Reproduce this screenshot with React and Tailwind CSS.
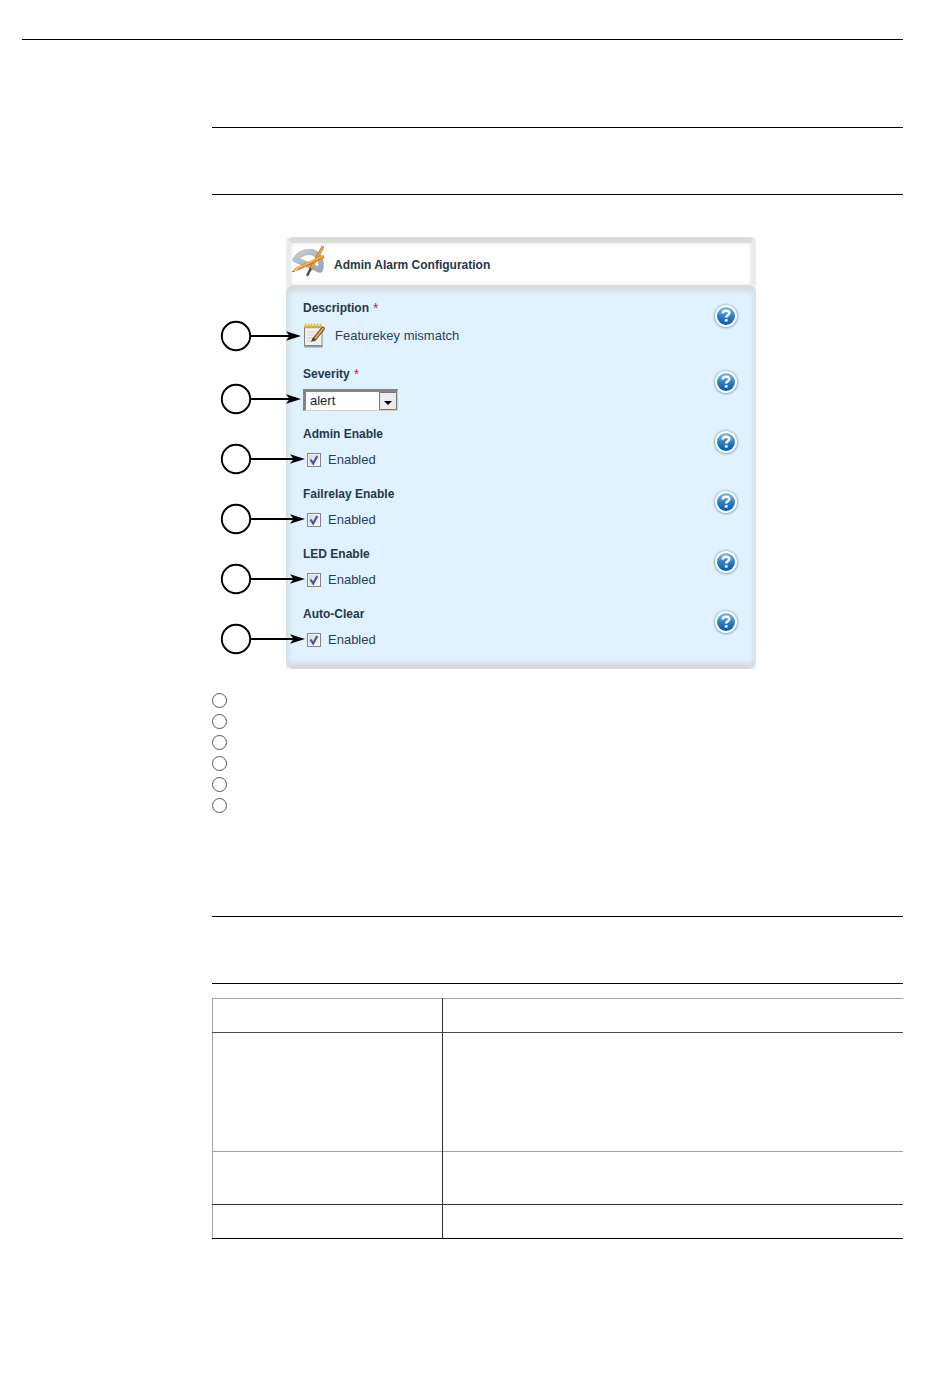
import React, { useState } from "react";

function Callout({ long }) {
  const tip = long ? 85 : 81;
  return (
    <svg width="88" height="32" viewBox="0 0 88 32" fill="none" aria-hidden="true">
      <circle cx="16" cy="16" r="14.2" fill="#fff" stroke="#000" strokeWidth="1.9" />
      <path d={`M30 16H${tip - 9}`} stroke="#000" strokeWidth="2" />
      <path d={`M${tip} 16l-15 -4.7l3.6 4.7l-3.6 4.7z`} fill="#000" />
    </svg>
  );
}

function HelpButton({ topic }) {
  return (
    <button type="button" aria-label={`Help: ${topic}`} className="mt-1 size-7 shrink-0 cursor-pointer">
      <svg width="28" height="28" viewBox="0 0 28 28" fill="none" aria-hidden="true">
        <defs>
          <linearGradient id="help-fill" x1="0" y1="0" x2="0" y2="1">
            <stop offset="0" stopColor="#79bdf0" />
            <stop offset="0.5" stopColor="#2f80cb" />
            <stop offset="1" stopColor="#0b57a4" />
          </linearGradient>
          <radialGradient id="help-halo">
            <stop offset="0.72" stopColor="#6d8795" stopOpacity="0.8" />
            <stop offset="1" stopColor="#b9cfdb" stopOpacity="0" />
          </radialGradient>
        </defs>
        <circle cx="14" cy="14.3" r="14" fill="url(#help-halo)" />
        <circle cx="14" cy="14" r="11" fill="#fff" />
        <circle cx="14" cy="14" r="9" fill="url(#help-fill)" />
        <path d="M10.8 11.6c0-1.8 1.2-2.8 3.2-2.8s3.2 1 3.2 2.4c0 2.1-3 2-3 4.4" stroke="#fff" strokeWidth="2.6" />
        <path d="M12.8 17.2h2.8v2.4h-2.8z" fill="#fff" />
      </svg>
    </button>
  );
}

function ToolsIcon() {
  return (
    <svg width="36" height="36" viewBox="0 0 36 36" fill="none" aria-hidden="true">
      <defs>
        <linearGradient id="protractor" x1="0" y1="0" x2="1" y2="1">
          <stop offset="0" stopColor="#c6cfd6" />
          <stop offset="1" stopColor="#93a3b0" />
        </linearGradient>
      </defs>
      <path
        fillRule="evenodd"
        d="M2 15C5 8 14 4 22 5.500c8 2 12 10 10 20-.6 3-3 4-5 2.500L3.500 18c-1.500-.6-2-1.800-1.500-3z M8.500 14.500c4-4 10-5 14.500-2.500 3.500 2 5 6 4.500 10.500z"
        fill="url(#protractor)"
        stroke="#a3aeb6"
        strokeWidth="0.6"
      />
      <path d="M31.500 3.500L19 26" stroke="#c46a1a" strokeWidth="2.8" strokeLinecap="round" />
      <path d="M31.500 3.500L20 25" stroke="#f5a744" strokeWidth="1.6" strokeLinecap="round" />
      <path d="M19.500 25L16.500 31" stroke="#4a4c58" strokeWidth="2.400" strokeLinecap="round" />
      <path d="M31.500 13L5 25.500" stroke="#d67b16" strokeWidth="3.400" strokeLinecap="round" />
      <path d="M31 12.600L6 24.500" stroke="#fbb851" strokeWidth="1.600" strokeLinecap="round" />
      <path d="M6 23.500l1.500 3L.8 28z" fill="#e2bd91" />
      <path d="M2.800 26.400l.5 1.100L.6 28.200z" fill="#333" />
    </svg>
  );
}

function NoteIcon() {
  return (
    <svg width="24" height="26" viewBox="0 0 24 26" fill="none" aria-hidden="true">
      <path d="M2 23.500h17" stroke="#91a0a8" strokeWidth="2" strokeLinecap="round" />
      <path d="M1.500 4h17.500v18.500H1.500z" fill="#f1f1ee" stroke="#82827e" strokeWidth="1" />
      <path d="M4 9h12M4 12h11M4 15h10M4 18h9" stroke="#d0d0cc" strokeWidth="1" />
      <path d="M1.500 3.500h17.500v1.600H1.500z" fill="#c89b1f" />
      <path d="M2.500 1.500v3M5.500 1.500v3M8.500 1.500v3M11.500 1.500v3M14.500 1.500v3M17.500 1.500v3" stroke="#e8b923" strokeWidth="1.800" strokeLinecap="round" />
      <path d="M20 5.500L11.500 16" stroke="#7a4f20" strokeWidth="3.800" strokeLinecap="round" />
      <path d="M20 5.500L12.500 15" stroke="#d8ab69" strokeWidth="2" strokeLinecap="round" />
      <path d="M9.800 14.500l3 2.600L8 19z" fill="#4b4033" />
    </svg>
  );
}

function Field({ id, label, required, long, tall, children }) {
  return (
    <div className={`relative flex justify-between ${tall ? "h-[66px]" : "h-[60px]"}`}>
      <div>
        <label htmlFor={id} className="flex h-5 gap-1 text-[12px] leading-5 font-bold text-[#26384a]">
          {label}
          {required && <span className="text-[14px] font-normal text-[#f01818]">*</span>}
        </label>
        <div className={`flex items-center ${tall ? "h-[35px]" : "h-[31px]"}`}>{children}</div>
      </div>
      <HelpButton topic={label} />
      <div className={`pointer-events-none absolute -left-[83px] ${tall ? "top-[22px]" : "top-[19px]"}`}>
        <Callout long={long} />
      </div>
    </div>
  );
}

function CheckField({ id, label }) {
  const [on, setOn] = useState(true);
  return (
    <Field id={id} label={label} long>
      <span className="ml-1 grid">
        <input
          id={id}
          type="checkbox"
          checked={on}
          onChange={(e) => setOn(e.target.checked)}
          className="col-start-1 row-start-1 size-[14px] appearance-none border border-[#858585] bg-linear-to-br from-[#d3d5da] to-[#fafafa] shadow-[inset_0_0_0_1px_#f4f4f4]"
        />
        {on && (
          <svg className="pointer-events-none col-start-1 row-start-1" width="14" height="14" viewBox="0 0 14 14" fill="none" aria-hidden="true">
            <path d="M3.500 6.500l2.700 4L10.300 3" stroke="#4058a0" strokeWidth="2.200" />
          </svg>
        )}
      </span>
      <label htmlFor={id} className="ml-[7px] text-[13px] text-[#2c4156]">
        Enabled
      </label>
    </Field>
  );
}

function Panel() {
  return (
    <form className="w-[470px] bg-[#edf1f5] text-[#26384a]" onSubmit={(e) => e.preventDefault()}>
      <div className="flex h-12 items-center rounded-t-lg border-x-[5px] border-t-[6px] border-[#dcdcdc] border-x-[#ebebeb] bg-white shadow-[inset_0_0_4px_#e4e4e0]">
        <span className="-mt-1 w-[43px]">
          <ToolsIcon />
        </span>
        <h2 className="mt-[2px] text-[12px] font-bold">Admin Alarm Configuration</h2>
      </div>
      <div className="rounded-lg border-t-4 border-b-4 border-[#d8dbdd] bg-[#e0f2ff] pt-[9px] pr-4 pb-px pl-[17px] shadow-[inset_0_0_6px_2px_#cfd9df]">
        <Field id="description" label="Description" required tall>
          <NoteIcon />
          <output id="description" className="ml-2 text-[13px] text-[#2c4156]">
            Featurekey mismatch
          </output>
        </Field>
        <Field id="severity" label="Severity" required>
          <span className="grid h-[22px] w-[95px] border-t-[3px] border-r border-b border-l-[3px] border-[#858585] border-r-[#d4d0c8] border-b-[#d4d0c8] bg-white">
            <select id="severity" defaultValue="alert" className="col-start-1 row-start-1 appearance-none pl-1 text-[13px] leading-4 text-[#161f2c]">
              <option value="alert">alert</option>
            </select>
            <svg className="pointer-events-none col-start-1 row-start-1 justify-self-end" width="18" height="18" viewBox="0 0 18 18" aria-hidden="true">
              <path d="M.5.5h17v17H.5z" fill="#ececec" stroke="#777" />
              <path d="M5 9h8l-4 4z" fill="#000" />
            </svg>
          </span>
        </Field>
        <CheckField id="admin-enable" label="Admin Enable" />
        <CheckField id="failrelay-enable" label="Failrelay Enable" />
        <CheckField id="led-enable" label="LED Enable" />
        <CheckField id="auto-clear" label="Auto-Clear" />
      </div>
    </form>
  );
}

export default function App() {
  return (
    <main className="bg-white pr-[47px] pb-36 pl-[22px] font-['Liberation_Sans',Arial,sans-serif]">
      <header className="h-10 border-b border-black" />
      <article className="ml-[190px]">
        <section className="mt-[87px] h-[68px] border-y border-black" />
        <figure className="mt-[42px] ml-[74px]">
          <Panel />
        </figure>
        <ol className="mt-[21px]">
          {[1, 2, 3, 4, 5, 6].map((n) => (
            <li key={n} className="flex h-[21px] items-center">
              <span className="size-[15px] rounded-full border border-[#555]" />
            </li>
          ))}
        </ol>
        <section className="mt-[100px] h-[68px] border-y border-black" />
        <table className="mt-[14px] w-full table-fixed border-collapse border-t border-l border-[#a3a3a3]">
          <colgroup>
            <col className="w-[230px]" />
            <col />
          </colgroup>
          <tbody>
            <tr className="h-[34px] border-b border-[#484848]">
              <td className="border-r border-[#333]" />
              <td />
            </tr>
            <tr className="h-[119px] border-b border-[#a3a3a3]">
              <td className="border-r border-[#333]" />
              <td />
            </tr>
            <tr className="h-[53px] border-b border-[#333]">
              <td className="border-r border-[#333]" />
              <td />
            </tr>
            <tr className="h-[34px] border-b border-black">
              <td className="border-r border-[#333]" />
              <td />
            </tr>
          </tbody>
        </table>
      </article>
    </main>
  );
}
